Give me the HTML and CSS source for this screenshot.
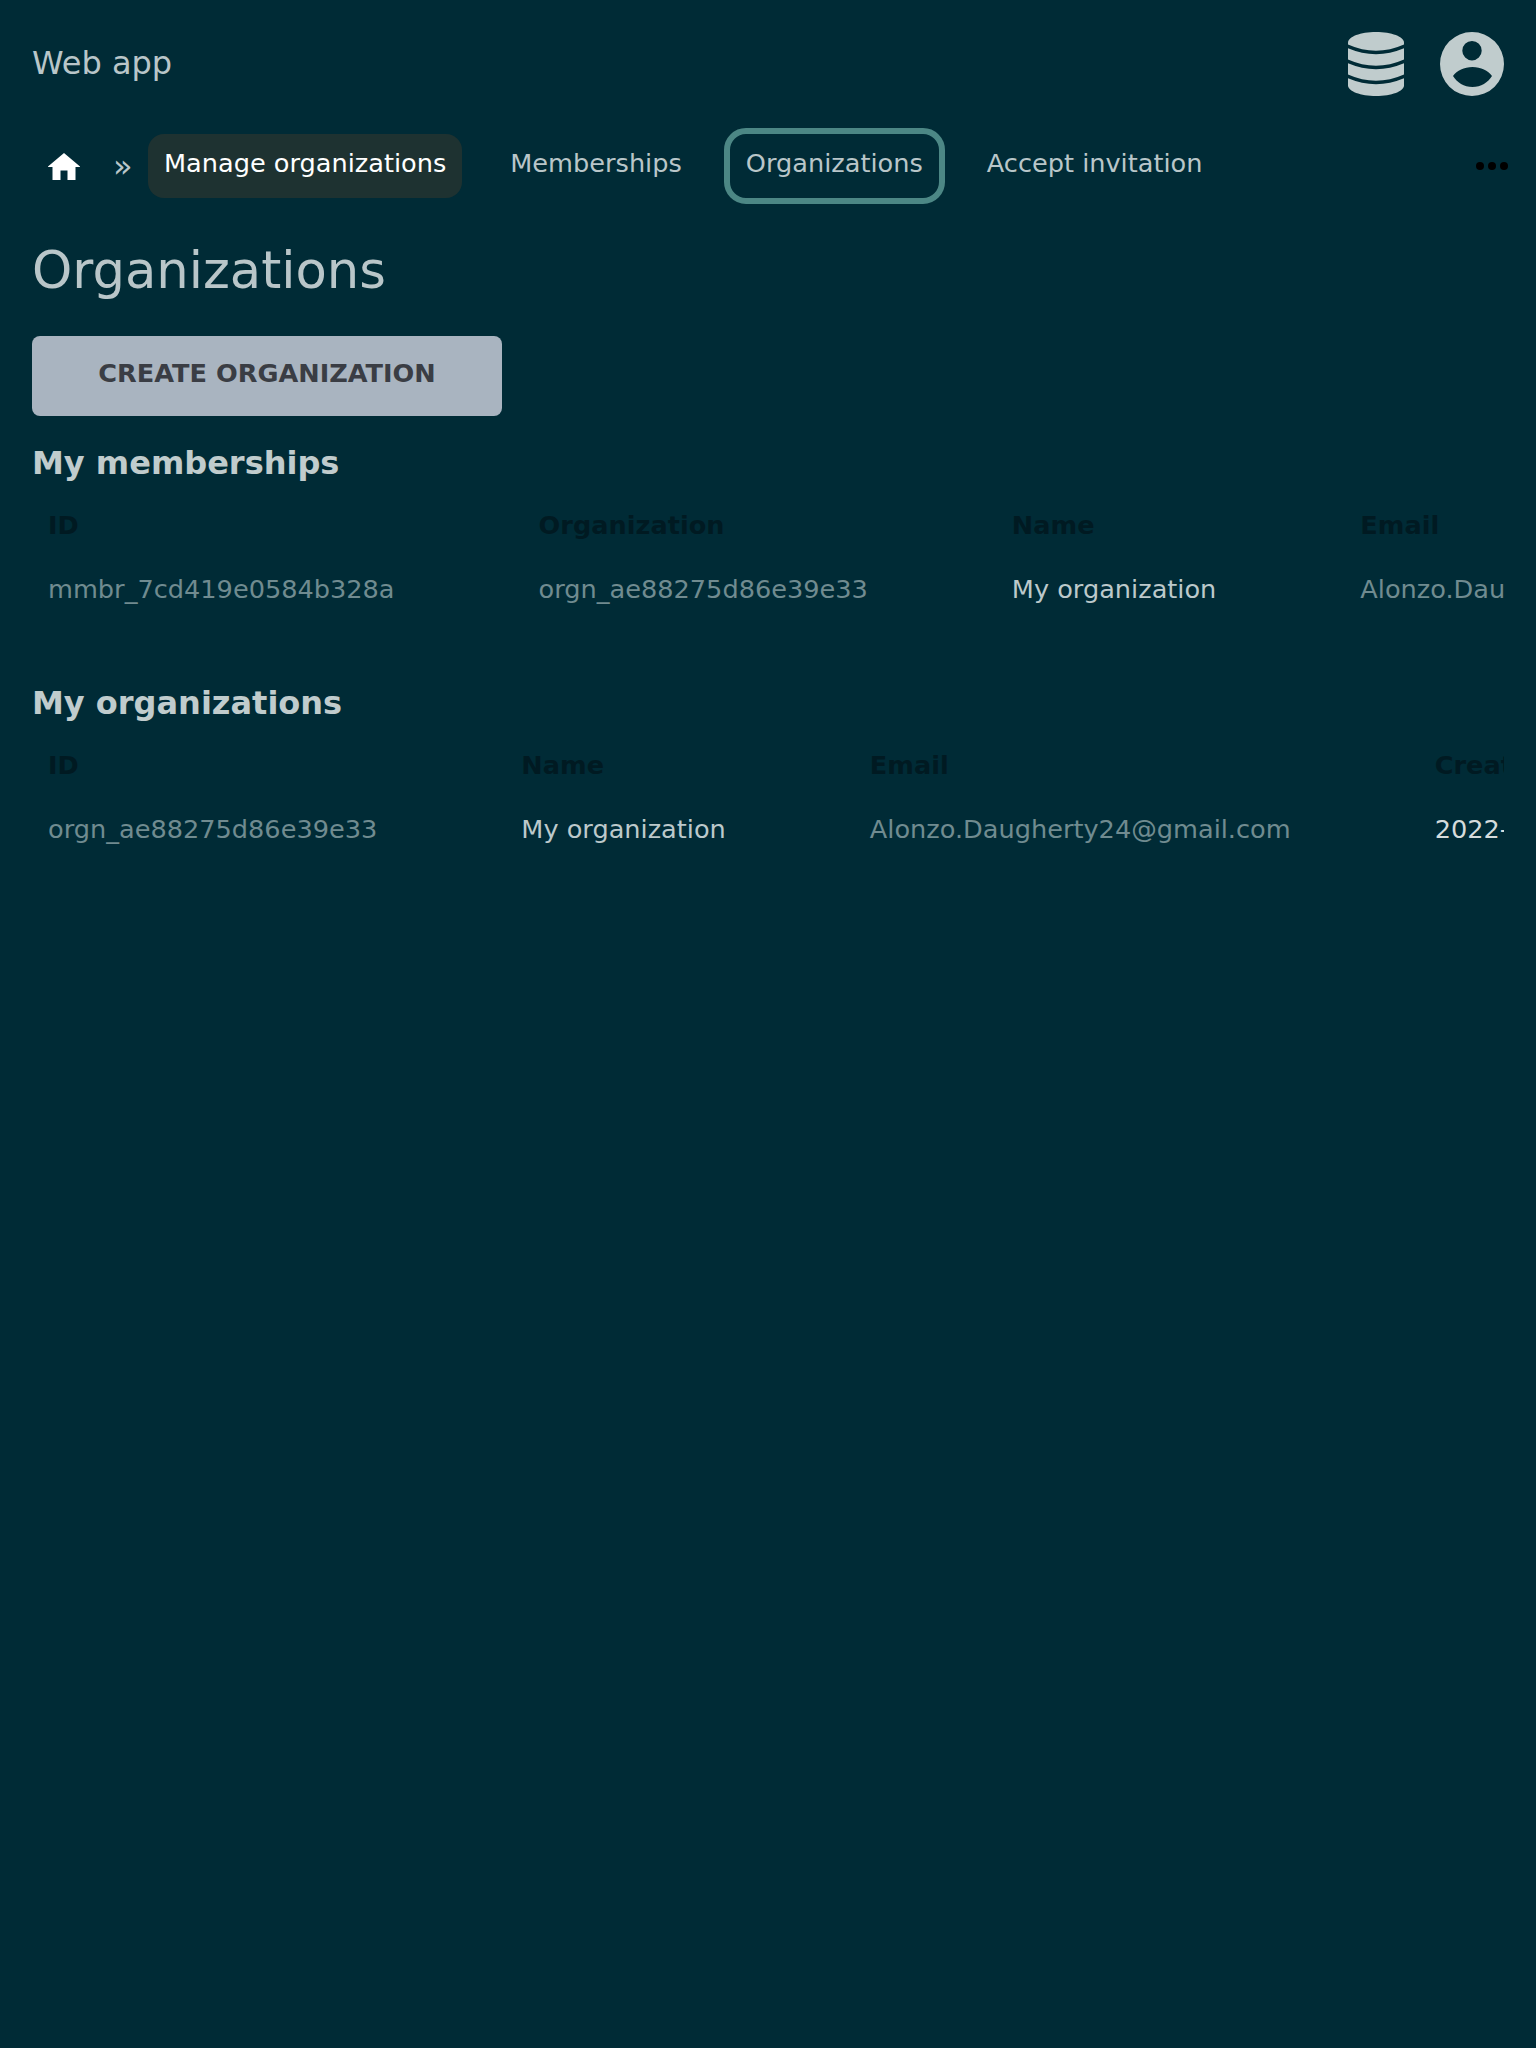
FILE: index.html
```html
<!DOCTYPE html>
<html lang="en">
<head>
    <meta charset="UTF-8">
    <meta name="viewport" content="width=device-width, initial-scale=1.0">
    <title>Organizations</title>
    <link rel="stylesheet" href="styles.css">
</head>
<body>
    <!-- Top bar -->
    <header class="topbar">
        <span class="brand">Web app</span>
        <div class="topbar-icons">
            <svg class="icon-db" viewBox="0 0 56 64" width="56" height="64">
                <path class="db-body" d="M0 10.5C0 4.7 12.5 0 28 0s28 4.7 28 10.5v43C56 59.300 43.500 64 28 64S0 59.300 0 53.500z"/>
                <path class="db-line" d="M-1 14Q28 27 57 14M-1 29Q28 42 57 29M-1 44Q28 57 57 44"/>
            </svg>
            <svg class="icon-user" viewBox="0 0 64 64" width="64" height="64">
                <path fill-rule="evenodd" d="M32 0a32 32 0 1 0 0 64a32 32 0 1 0 0-64zM32 9a9.700 9.700 0 1 0 0 19.400a9.700 9.700 0 1 0 0-19.400zM13 44C17 38.500 24 35 32.500 35S48 38.500 52 44C48 50.500 41 55 32.500 55S17 50.500 13 44z"/>
            </svg>
        </div>
    </header>

    <!-- Breadcrumb -->
    <nav class="crumbs">
        <a class="crumb-home">
            <svg viewBox="0 0 32 27" width="32" height="27">
                <path d="M16 0L32 13.500V14H27.500V27H19.500V17.500H12.500V27H4.500V14H0V13.500z"/>
            </svg>
        </a>
        <span class="crumb-sep">»</span>
        <div class="crumb-items">
            <a class="crumb-item crumb-active">Manage organizations</a>
            <a class="crumb-item">Memberships</a>
            <a class="crumb-item crumb-focus">Organizations</a>
            <a class="crumb-item">Accept invitation</a>
        </div>
        <span class="crumb-more"><i></i><i></i><i></i></span>
    </nav>

    <main class="content">
        <h1>Organizations</h1>
        <button class="btn-create">CREATE ORGANIZATION</button>

        <h2>My memberships</h2>
        <div class="table-wrap">
            <table>
                <thead>
                    <tr>
                        <th>ID</th>
                        <th>Organization</th>
                        <th>Name</th>
                        <th>Email</th>
                    </tr>
                </thead>
                <tbody>
                    <tr>
                        <td class="muted">mmbr_7cd419e0584b328a</td>
                        <td class="muted">orgn_ae88275d86e39e33</td>
                        <td>My organization</td>
                        <td class="muted">Alonzo.Daugherty24@gmail.com</td>
                    </tr>
                </tbody>
            </table>
        </div>

        <h2>My organizations</h2>
        <div class="table-wrap">
            <table>
                <thead>
                    <tr>
                        <th>ID</th>
                        <th>Name</th>
                        <th>Email</th>
                        <th>Created at</th>
                    </tr>
                </thead>
                <tbody>
                    <tr>
                        <td class="muted">orgn_ae88275d86e39e33</td>
                        <td>My organization</td>
                        <td class="muted">Alonzo.Daugherty24@gmail.com</td>
                        <td class="bright">2022-10-04 12:30</td>
                    </tr>
                </tbody>
            </table>
        </div>
    </main>
</body>
</html>
```

FILE: styles.css
```css
html, body {
    margin: 0;
    min-height: 2048px;
    background-color: #002b36;
}

body {
    font-family: "DejaVu Sans", sans-serif;
    font-size: 25.6px;
    line-height: 36px;
    color: #b9c6c9;
}

/* Top bar */
.topbar {
    display: flex;
    justify-content: space-between;
    align-items: flex-start;
    padding: 32px 32px 0;
    height: 64px;
}

.brand {
    font-size: 32px;
    line-height: 62px;
    color: #b9c6c9;
}

.topbar-icons {
    display: flex;
    gap: 36px;
}

.topbar-icons svg {
    display: block;
    fill: #c0cccd;
}

.db-line {
    fill: none;
    stroke: #002b36;
    stroke-width: 3.5;
}

/* Breadcrumb */
.crumbs {
    display: flex;
    align-items: flex-start;
    padding: 38px 32px 0;
    height: 64px;
    white-space: nowrap;
}

.crumb-home {
    display: flex;
    padding: 19px 16px 0;
}

.crumb-home svg {
    fill: #ffffff;
}

.crumb-sep {
    width: 52px;
    padding: 12px 0 0 17px;
    box-sizing: border-box;
    font-size: 32px;
    line-height: 40px;
    color: #b9c6c9;
}

.crumb-items {
    display: flex;
    gap: 32px;
}

.crumb-item {
    display: block;
    height: 64px;
    box-sizing: border-box;
    padding: 11px 16px 16px;
    border-radius: 16px;
    color: #b9c6c9;
}

.crumb-active {
    background-color: #1e3231;
    color: #ffffff;
}

.crumb-focus {
    outline: 6px solid #4c8785;
}

.crumb-more {
    display: flex;
    gap: 4px;
    margin-left: auto;
    margin-right: -4px;
    padding-top: 28px;
}

.crumb-more i {
    display: block;
    width: 8px;
    height: 8px;
    border-radius: 50%;
    background-color: #000000;
}

/* Content */
.content {
    padding: 0 32px;
}

h1 {
    margin: 36px 0 0;
    font-size: 51.2px;
    font-weight: 400;
    line-height: 72px;
    color: #b9c6c9;
}

.btn-create {
    display: block;
    width: 470px;
    height: 80px;
    margin-top: 30px;
    padding: 0 0 6px;
    border: none;
    border-radius: 8px;
    background-color: #a9b4c0;
    color: #3a3d44;
    font-family: inherit;
    font-size: 25.6px;
    font-weight: 700;
}

h2 {
    margin: 23px 0 6px;
    font-size: 32px;
    font-weight: 700;
    line-height: 48px;
    color: #c0cccd;
}

.table-wrap {
    overflow: hidden;
    margin-bottom: 58px;
}

table {
    border-collapse: collapse;
    white-space: nowrap;
}

th, td {
    padding: 16px 128px 16px 16px;
    line-height: 32px;
    text-align: left;
}

th {
    color: #001a22;
}

td {
    color: #bcc9cb;
}

td.muted {
    color: #708b90;
}

td.bright {
    color: #d5dcdc;
}
```
